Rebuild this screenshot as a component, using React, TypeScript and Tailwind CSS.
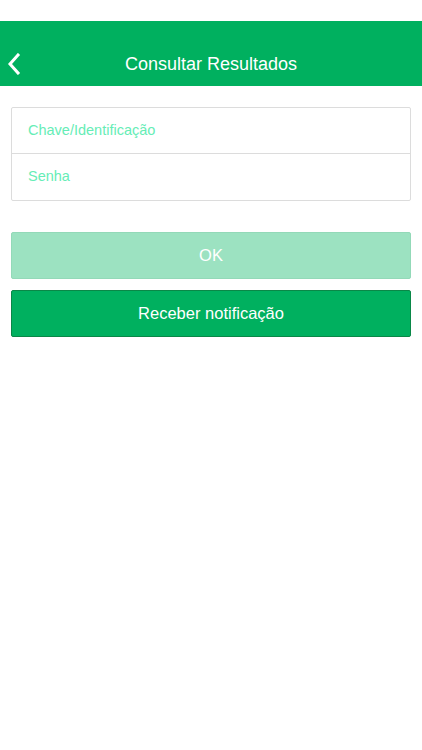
import React from 'react';

export default function App() {
    return (
        <div className="min-h-[750px] w-full bg-white" style={{ fontFamily: '"Liberation Sans", Arial, sans-serif' }}>
            <div className="h-[21px] bg-white" />
            <header className="bg-[#00b05f] pt-[21px]">
                <div className="relative h-[44px] flex items-center justify-center">
                    <button className="absolute left-[7px] top-[11px] text-white">
                        <svg width="14" height="22" viewBox="0 0 14 22" fill="none">
                            <path d="M11 2 L3 11 L11 20" stroke="white" strokeWidth="3" strokeLinecap="square" />
                        </svg>
                    </button>
                    <h1 className="text-white text-[18px] font-medium">Consultar Resultados</h1>
                </div>
            </header>

            <main className="px-[11px] pt-[21px]">
                <div className="border border-[#dcdcdc] rounded-[2px] bg-white">
                    <div className="h-[46px] flex items-center px-[16px] border-b border-[#dcdcdc]">
                        <span className="text-[14.5px] text-[#66edb6]">Chave/Identificação</span>
                    </div>
                    <div className="h-[46px] flex items-center px-[16px]">
                        <span className="text-[14.5px] text-[#66edb6]">Senha</span>
                    </div>
                </div>

                <div className="mt-[31px] flex flex-col gap-[11px]">
                    <button className="h-[47px] w-full rounded-[2px] bg-[#9ce2c1] border border-[#93d9b8] text-white text-[16.5px]">
                        OK
                    </button>
                    <button className="h-[47px] w-full rounded-[2px] bg-[#00b05f] border border-[#0a8747] text-white text-[16.5px]">
                        Receber notificação
                    </button>
                </div>
            </main>
        </div>
    );
}
